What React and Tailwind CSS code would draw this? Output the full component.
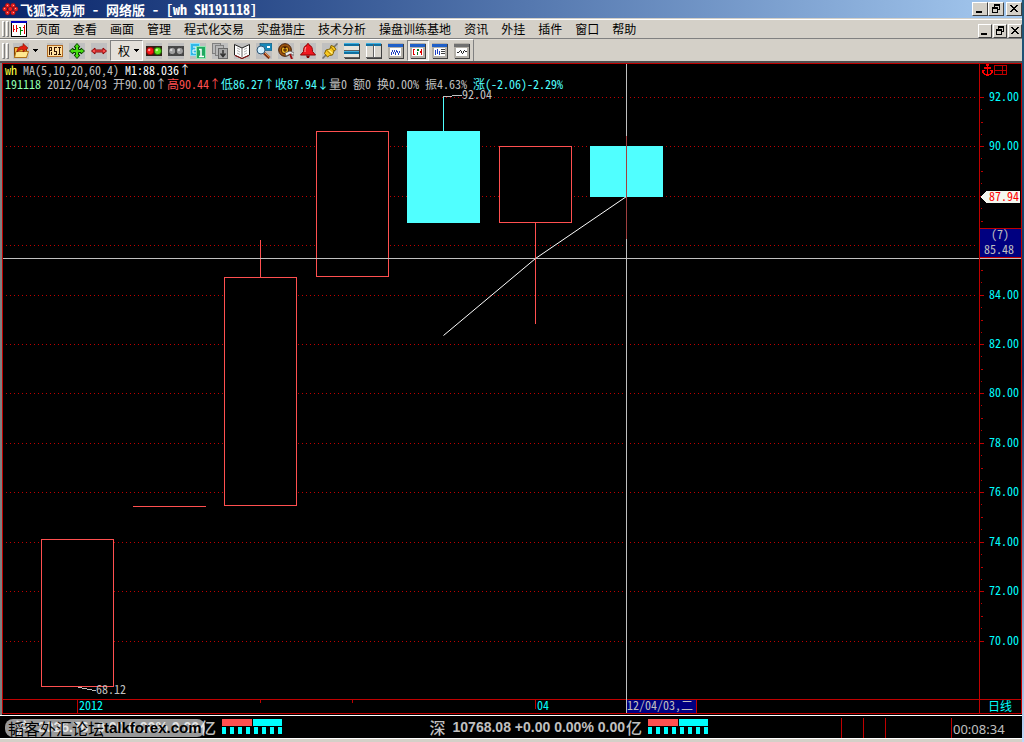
import clsx from "clsx";

const MENUS = [
  "页面", "查看", "画面", "管理", "程式化交易", "实盘猎庄", "技术分析",
  "操盘训练基地", "资讯", "外挂", "插件", "窗口", "帮助",
];

const QUOTE = [
  { text: "191118 ", color: "text-[#90ffb0]" },
  { text: "2012/04/03 开90.00↑", color: "text-[#c0c0c0]" },
  { text: "高90.44↑", color: "text-[#ff5050]" },
  { text: "低86.27↑收87.94↓", color: "text-[#50ffff]" },
  { text: "量0 额0 换0.00% 振4.63% ", color: "text-[#c0c0c0]" },
  { text: "涨(-2.06)-2.29%", color: "text-[#50ffff]" },
];

const GRID_LINES = [97, 146, 196, 245, 295, 344, 393, 443, 492, 542, 591, 641];

const PRICES = [
  { y: 97, label: "92.00" },
  { y: 146, label: "90.00" },
  { y: 295, label: "84.00" },
  { y: 344, label: "82.00" },
  { y: 393, label: "80.00" },
  { y: 443, label: "78.00" },
  { y: 492, label: "76.00" },
  { y: 542, label: "74.00" },
  { y: 591, label: "72.00" },
  { y: 641, label: "70.00" },
];

const CANDLES = [
  { x: 41, top: 539, bottom: 686 },
  { x: 224, top: 277, bottom: 505, wick: [240, 277] },
  { x: 316, top: 131, bottom: 276 },
  { x: 407, top: 131, bottom: 222, wick: [96, 131], down: true },
  { x: 499, top: 146, bottom: 222, wick: [222, 323] },
  { x: 590, top: 146, bottom: 196, down: true },
];

const RED = "#c00000";
const MONO = "[font-feature-settings:'hwid']";

/* ---------- window chrome ---------- */

const Glyph = ({ kind }) => (
  <svg width="10" height="10" viewBox="0 0 10 10" shapeRendering="crispEdges">
    {kind === "min" && <rect x="1" y="7" width="6" height="2" />}
    {kind === "restore" && (
      <path
        fillRule="evenodd"
        d="M3 0h6v6H7v3H1V3h2zM4 2v1h3v2h1V2zM2 5v3h4V5z"
      />
    )}
    {kind === "close" && (
      <path d="M1 1h2v1h1v1h2V2h1V1h2v1H8v1H7v1H6v1h1v1h1v1h1v1H7V7H6V6H4v1H3v1H1V7h1V6h1V5h1V4H3V3H2V2H1z" />
    )}
  </svg>
);

const WinButton = ({ kind, small, label }) => (
  <button
    aria-label={label}
    className={clsx(
      "flex h-[14px] items-center justify-center border border-t-white border-l-white border-r-[#404040] border-b-[#404040] bg-[#d4d0c8]",
      small ? "w-[14px]" : "w-4"
    )}
  >
    <Glyph kind={kind} />
  </button>
);

const Grip = () => (
  <div className="flex h-4 w-[7px] gap-px">
    <span className="w-[3px] border border-t-white border-l-white border-r-[#808080] border-b-[#808080]" />
    <span className="w-[3px] border border-t-white border-l-white border-r-[#808080] border-b-[#808080]" />
  </div>
);

const FoxLogo = () => (
  <svg width="17" height="14" viewBox="0 0 17 14">
    <g fill="#f02020" stroke="#801010" strokeWidth="0.5">
      <circle cx="5.5" cy="3.5" r="2.3" />
      <circle cx="11" cy="3.5" r="2.3" />
      <circle cx="2.8" cy="7" r="2.3" />
      <circle cx="8.3" cy="7" r="2.3" />
      <circle cx="13.8" cy="7" r="2.3" />
      <circle cx="5.5" cy="10.8" r="2.3" />
      <circle cx="11" cy="10.8" r="2.3" />
    </g>
    <g fill="#ffb0a0">
      <rect x="5" y="3" width="1" height="1" />
      <rect x="11" y="3" width="1" height="1" />
      <rect x="2" y="6" width="1" height="1" />
      <rect x="13" y="6" width="1" height="1" />
      <rect x="5" y="10" width="1" height="1" />
      <rect x="11" y="10" width="1" height="1" />
    </g>
  </svg>
);

const DocIcon = () => (
  <svg width="16" height="16" viewBox="0 0 16 16" shapeRendering="crispEdges">
    <rect width="16" height="16" fill="#000" />
    <rect width="16" height="2" fill="#0000c0" />
    <rect x="1" y="2" width="14" height="13" fill="#fff" />
    <path d="M2 4h1v7H2zM3 8h1v1H3zM5 4h1v7H5zM6 7h1v1H6z" fill="#e00000" />
    <path d="M9 6h1v8H9zM8 6h1v1H8zM10 9h2v1h-2z" fill="#008000" />
    <path d="M13 4h1v9h-1zM12 6h1v1h-1z" fill="#e00000" />
  </svg>
);

/* ---------- toolbar icons ---------- */

const Tile = ({ children }) => (
  <svg width="16" height="16" viewBox="0 0 16 16">
    <rect width="16" height="16" fill="#c0c0c0" />
    {children}
  </svg>
);

const OpenIcon = () => (
  <Tile>
    <path d="M1.500 4.500h4l1 1h7v9h-12z" fill="#f8b838" stroke="#804000" />
    <path d="M1.500 14.500l1.500-6h12.500l-2 6z" fill="#ffe890" stroke="#b07018" />
    <path d="M4 9c0-4 3-6 6-6V0.500L15 5l-5 4V6.500C8 6.500 6 7 4 9z" fill="#e02010" stroke="#801000" strokeWidth="0.6" />
  </Tile>
);

const RsiIcon = () => (
  <Tile>
    <rect x="0.5" y="2.5" width="15" height="11" fill="#ffe0a0" stroke="#b06820" />
    <g fill="none" stroke="#301000" shapeRendering="crispEdges">
      <path d="M2.500 12V4.500h2v3h-2M4.500 8.500V12" />
      <path d="M10 4.500H7.500v3.500h2v3.500H7" />
      <path d="M11 4.500h3M12.500 4v8M11 11.500h3" />
    </g>
  </Tile>
);

const MoveIcon = () => (
  <Tile>
    <path
      d="M8 0.500l3 3.500H9.500v2.500H12V5l3.500 3-3.500 3V9.500H9.500V12H11l-3 3.500L5 12h1.500V9.500H4V11L0.500 8 4 5v1.500h2.500V4H5z"
      fill="#48e010"
      stroke="#084000"
    />
  </Tile>
);

const WidthIcon = () => (
  <Tile>
    <path d="M0.500 8L4 5v2h8V5l3.500 3-3.500 3V9H4v2z" fill="#f85050" stroke="#900000" />
  </Tile>
);

const Lights = ({ on }) => (
  <Tile>
    <path d="M0 3h16v10H0z" fill={on ? "#302018" : "#484848"} />
    <circle cx="4.200" cy="8" r="3.700" fill={on ? "#f81818" : "#a0a0a0"} stroke={on ? "#900000" : "#303030"} strokeWidth="0.800" />
    <circle cx="11.800" cy="8" r="3.700" fill={on ? "#60e020" : "#a0a0a0"} stroke={on ? "#106000" : "#303030"} strokeWidth="0.800" />
    <circle cx="3.200" cy="7" r="1.200" fill={on ? "#ffa0a0" : "#d8d8d8"} />
    <circle cx="10.800" cy="7" r="1.200" fill={on ? "#d0ffa0" : "#d8d8d8"} />
  </Tile>
);

const CardsIcon = () => (
  <Tile>
    <rect x="0.500" y="0.500" width="9" height="12" fill="#30b8e8" stroke="#90e0f8" />
    <path d="M3 4h3v3H3v3h3" fill="none" stroke="#fff" />
    <rect x="6.500" y="3.500" width="9" height="12" fill="#20a860" stroke="#90e8b0" />
    <path d="M9 6.500h2v7M9 13.500h5" fill="none" stroke="#fff" strokeWidth="1.500" />
  </Tile>
);

const StackIcon = () => (
  <Tile>
    <rect x="0.500" y="0.500" width="8" height="10" fill="#b8b8b8" stroke="#808080" />
    <rect x="3.500" y="2.500" width="8" height="10" fill="#b8b8b8" stroke="#808080" />
    <rect x="6.500" y="5.500" width="9" height="10" fill="#a8a8a8" stroke="#686868" />
    <path d="M11 7v6M8.500 10.500L11 13.500l2.500-3" fill="none" stroke="#303030" strokeWidth="1.500" />
  </Tile>
);

const BookIcon = () => (
  <Tile>
    <path d="M0.500 1.500L8 5l7.500-3.500v10.500L8 15.500l-7.500-3.500z" fill="#fff" stroke="#202020" />
    <path d="M8 5v9" stroke="#606060" />
    <path d="M3 5l3 1.500M3 7.500L6 9M3 10l3 1.500M10 6.500L13 5M10 9l3-1.500M10 11.500l3-1.500" stroke="#b0b0b0" />
    <path d="M1 12.500l7 3 7-3" fill="none" stroke="#901010" />
  </Tile>
);

const FindIcon = () => (
  <Tile>
    <rect x="4" y="0.500" width="12" height="7" fill="#1888b8" stroke="#085078" strokeWidth="0.600" />
    <rect x="11" y="3" width="3" height="2" fill="#fff" />
    <path d="M8 10l5.500 5" stroke="#803010" strokeWidth="3" />
    <path d="M9 10l5 4.500" stroke="#f8a860" />
    <circle cx="5" cy="7" r="4" fill="#d0f0ff" stroke="#305878" />
    <path d="M3 7c0-1 1-2 2-2" fill="none" stroke="#fff" />
  </Tile>
);

const CoinIcon = () => (
  <Tile>
    <circle cx="7" cy="7" r="6.300" fill="#a05810" stroke="#401800" />
    <circle cx="7" cy="7" r="3.800" fill="#e8b020" stroke="#502000" />
    <path d="M5 7h4M7 5v4M5.500 4.500h3" stroke="#401800" />
    <path d="M7 10l5-2 4 2v2h-2v-1h-2l-4 2z" fill="#f0f0f0" stroke="#404040" strokeWidth="0.600" />
    <path d="M12 11l2 5" stroke="#a01010" strokeWidth="2" />
  </Tile>
);

const BellIcon = () => (
  <Tile>
    <path d="M8 0.500c1 0 1 1.500 1 1.500 3 1 3.500 3.500 3.500 6.500l3 3.500H0.500l3-3.500C3.500 5.500 4 3 7 2c0 0 0-1.500 1-1.500z" fill="#f01820" stroke="#900000" />
    <path d="M6 12.500h4l-1 2.500H7z" fill="#800000" />
    <path d="M6 4c-1 1-1 3-1 5" fill="none" stroke="#ffb0b0" />
  </Tile>
);

const PlugIcon = () => (
  <Tile>
    <path d="M0.500 15.500L4 12M12 4l3.500-3.500" stroke="#707070" strokeWidth="1.500" />
    <path d="M2.500 10.500L4 7l4-1 1-3.500 3 1 2 3-2 1.500-1.500 4-3 0.500-2 1.500z" fill="#f8c820" stroke="#806000" />
    <path d="M5 7.500l4 4M9 4l3 4" stroke="#a07000" />
    <path d="M6.500 7l4 3.500" stroke="#fff090" strokeWidth="1.200" />
  </Tile>
);

const RowsIcon = () => (
  <Tile>
    <g shapeRendering="crispEdges">
      <path d="M1 1h15v15H1z" fill="#404040" />
      <path d="M0 0h15v15H0z" fill="#e8e4dc" />
      <path d="M0 0h15v1H0zM0 8h15v1H0z" fill="#40b0e0" />
      <path d="M0 1h15v2H0zM0 9h15v2H0z" fill="#1070a0" />
      <path d="M0 7h15v1H0zM0 14h15v1H0z" fill="#606060" />
    </g>
  </Tile>
);

const ColsIcon = () => (
  <Tile>
    <g shapeRendering="crispEdges">
      <path d="M1 1h15v15H1z" fill="#404040" />
      <path d="M0 0h15v15H0z" fill="#d8d4cc" />
      <path d="M0 0h15v1H0z" fill="#40b0e0" />
      <path d="M0 1h15v2H0z" fill="#1070a0" />
      <path d="M7 1h1v14H7zM0 14h15v1H0z" fill="#606060" />
      <path d="M8 3h1v11H8zM0 3h1v11H0z" fill="#fff" />
    </g>
  </Tile>
);

const PaneIcon = ({ bar = "#2060c8", children }) => (
  <Tile>
    <g shapeRendering="crispEdges">
      <path d="M1 1h15v15H1z" fill="#404040" />
      <path d="M0 0h15v15H0z" fill="#b4b0a8" />
      <path d="M0 1h15v3H0z" fill={bar} />
      <path d="M2 5h11v8H2z" fill="#fff" />
      {children}
    </g>
  </Tile>
);

const Arrow = () => (
  <svg width="5" height="3" viewBox="0 0 5 3" shapeRendering="crispEdges">
    <path d="M0 0h5v1H4v1H3v1H2V2H1V1H0z" />
  </svg>
);

const TOOLS_LEFT = [
  { label: "RSI", icon: <RsiIcon /> },
  { label: "移动", icon: <MoveIcon /> },
  { label: "缩放", icon: <WidthIcon /> },
];

const TOOLS_RIGHT = [
  { label: "信号开", icon: <Lights on /> },
  { label: "信号关", icon: <Lights /> },
  { label: "周期", icon: <CardsIcon /> },
  { label: "叠加", icon: <StackIcon /> },
  { label: "帮助", icon: <BookIcon /> },
  { label: "查找", icon: <FindIcon /> },
  { label: "工具", icon: <CoinIcon /> },
  { label: "预警", icon: <BellIcon /> },
  { label: "插件", icon: <PlugIcon /> },
  { label: "横向", icon: <RowsIcon /> },
  { label: "纵向", icon: <ColsIcon /> },
  {
    label: "分时",
    icon: (
      <PaneIcon>
        <path
          d="M3 9h1v3H3zM4 7h1v2H4zM5 9h1v2H5zM6 7h1v2H6zM7 9h1v3H7zM8 7h1v2H8zM9 8h1v2H9zM10 10h1v2h-1zM11 8h1v2h-1z"
          fill="#2040c0"
        />
      </PaneIcon>
    ),
  },
  {
    label: "K线",
    active: true,
    icon: (
      <PaneIcon>
        <path d="M3 6h2v1H4v4h1v1H3zM11 6h1v6h-1zM10 8h1v2h-1z" fill="#e00000" />
        <path d="M7 6h2v2H7zM7 9h1v3H7z" fill="#008020" />
      </PaneIcon>
    ),
  },
  {
    label: "报表",
    icon: (
      <PaneIcon>
        <path d="M3 7h1v5H3zM5 6h1v5H5zM7 8h1v4H7z" fill="#2040c0" />
        <path d="M9 6h4v1H9zM9 8h4v1H9zM9 10h4v1H9z" fill="#404040" />
      </PaneIcon>
    ),
  },
  {
    label: "走势",
    icon: (
      <PaneIcon bar="#707070">
        <path d="M3 9h2v1H3zM5 8h1v1H5zM6 7h1v1H6zM7 8h1v2H7zM8 10h1v1H8zM9 8h1v2H9zM10 7h1v1h-1zM11 8h2v1h-2z" fill="#303030" />
      </PaneIcon>
    ),
  },
];

const ToolButton = ({ tool }) => (
  <button
    aria-label={tool.label}
    className={clsx(
      "flex h-[21px] w-[22px] items-center justify-center",
      tool.active &&
        "border border-t-[#808080] border-l-[#808080] border-r-white border-b-white bg-[#ece9e4]"
    )}
  >
    {tool.icon}
  </button>
);

/* ---------- chart ---------- */

const Candle = ({ x, top, bottom, wick, down }) => {
  const color = down ? "#50ffff" : "#ff5050";
  return (
    <g>
      {wick && <rect x={x + 36} y={wick[0]} width="1" height={wick[1] - wick[0] + 1} fill={color} />}
      <rect
        x={x + 0.5}
        y={top + 0.5}
        width="72"
        height={bottom - top}
        fill={down ? color : "#000"}
        stroke={color}
      />
    </g>
  );
};

// Drawing coordinates are those of the whole window: the plot starts at (3, 64)
const Plot = () => (
  <svg className={clsx("block h-[649px] w-full text-[12px]", MONO)} shapeRendering="crispEdges">
    <g transform="translate(-3 -64)">
      {GRID_LINES.map((y) => (
        <line key={y} x1="6" x2="100%" y1={y + 0.5} y2={y + 0.5} stroke={RED} strokeDasharray="1 3" />
      ))}
      {CANDLES.map((c) => (
        <Candle key={c.x} {...c} />
      ))}
      <rect x="133" y="506" width="73" height="1" fill="#ff5050" />
      <polyline
        points="443.5,335.5 535.5,258.5 626.5,196.5"
        fill="none"
        stroke="#fff"
        shapeRendering="geometricPrecision"
      />

      <path d="M443 96.5h9M452 95.500h10M78 687.500h4M82 688.500h5M87 689.500h5M92 690.500h4" stroke="#c0c0c0" />
      <text x="462" y="99" fill="#c0c0c0">92.04</text>
      <text x="96" y="694" fill="#c0c0c0">68.12</text>

      {/* date axis */}
      <rect x="3" y="699" width="100%" height="1" fill={RED} />
      <rect x="77" y="699" width="1" height="14" fill={RED} />
      <rect x="260" y="699" width="1" height="4" fill={RED} />
      <rect x="352" y="699" width="1" height="4" fill={RED} />
      <rect x="535" y="699" width="1" height="10" fill={RED} />
      <text x="79" y="710" fill="#00ffff">2012</text>
      <text x="537" y="710" fill="#00ffff">04</text>
      <rect x="627" y="700" width="69" height="13" fill="#000080" />
      <rect x="696" y="700" width="1" height="13" fill={RED} />
      <text x="627" y="710" fill="#c0c0c0">12/04/03,二</text>

      {/* crosshair */}
      <rect x="3" y="258" width="100%" height="1" fill="#c0c0c0" />
      <rect x="626" y="64" width="1" height="649" fill="#c0c0c0" />
      <rect x="626" y="136" width="1" height="103" fill="#a04040" />
    </g>
  </svg>
);

const PriceAxis = () => (
  <svg className={clsx("block h-[649px] w-[41px] text-[12px]", MONO)} shapeRendering="crispEdges">
    <g transform="translate(-980 -64)">
      <path
        d="M986 64h3v2h-1v1h3v2h-3v5h2v-1h1v-2h-1v-1h3v3h-1v1h-1v1h-2v1h-3v-1h-2v-1h-1v-1h-1v-3h3v1h-1v2h1v1h2v-5h-3v-2h3v-1h-1z"
        fill="#ff0000"
      />
      <path d="M994.500 65.500h12v9h-12zM994 70.500h12M1002.500 65v9" fill="none" stroke={RED} />
      {GRID_LINES.map((y) => (
        <g key={y} fill={RED}>
          <rect x="980" y={y} width="4" height="1" />
          <rect x="981" y={y + 12} width="1" height="1" />
          <rect x="981" y={y + 25} width="2" height="1" />
          <rect x="981" y={y + 37} width="1" height="1" />
        </g>
      ))}
      <rect x="980" y="653" width="5" height="46" fill="#000" />
      {PRICES.map((p) => (
        <text key={p.label} x="989" y={p.y + 4} fill="#00ffff">{p.label}</text>
      ))}
      <path d="M980 197l6-6h34v12h-34z" fill="#f4f8f0" />
      <text x="989" y="201" fill="#ff0000">87.94</text>
      <rect x="980" y="228" width="41" height="30" fill={RED} />
      <rect x="980" y="229" width="41" height="28" fill="#000080" />
      <text x="991" y="239" fill="#c0c0c0">(7)</text>
      <text x="984" y="254" fill="#c0c0c0">85.48</text>
      <rect x="980" y="258" width="41" height="1" fill="#c0c0c0" />
      <rect x="980" y="699" width="41" height="1" fill={RED} />
      <text x="988" y="711" fill="#00ffff">日线</text>
    </g>
  </svg>
);

/* ---------- status bar ---------- */

const Meter = () => (
  <div className="flex w-[60px] flex-col gap-px">
    <div className="flex gap-px">
      <span className="h-[7px] w-[30px] bg-[#ff5050]" />
      <span className="h-[7px] flex-1 bg-[#00ffff]" />
    </div>
    <div className="flex justify-between">
      {[0, 1, 2, 3, 4, 5, 6, 7].map((i) => (
        <span key={i} className="h-[7px] w-1 bg-[#00ffff]" />
      ))}
    </div>
  </div>
);

const IndexCell = ({ name, quote, className }) => (
  <div className={clsx("flex items-center justify-end pb-px text-[#c0c0c0]", className)}>
    <span className="text-[16px] font-medium">{name}</span>
    <span className="ml-[7px] font-['Liberation_Sans',sans-serif] text-[14px] font-bold">{quote}</span>
    <span className="mr-[6px] ml-px text-[16px] font-medium">亿</span>
    <Meter />
  </div>
);

export default function App() {
  return (
    <div className="flex w-full overflow-hidden bg-[#d4d0c8] font-['Noto_Sans_CJK_SC',sans-serif] text-black">
      <div className="min-w-0 flex-1">
        {/* title bar */}
        <header className="flex h-[18px] items-center bg-linear-to-r from-[#0a246a] to-[#a6caf0] pl-[2px]">
          <FoxLogo />
          <h1 className={clsx("ml-px flex-1 whitespace-pre text-[13px] leading-[18px] font-bold text-white", MONO)}>
            飞狐交易师<span className="text-[14px]"> - </span>网络版
            <span className="text-[14px]"> - [wh SH191118]</span>
          </h1>
          <WinButton kind="min" label="最小化" />
          <WinButton kind="restore" label="还原" />
          <span className="w-[2px]" />
          <WinButton kind="close" label="关闭" />
        </header>

        {/* menu bar */}
        <nav className="mt-px flex h-5 items-center border-t border-b border-t-white border-b-[#808080] pl-[2px]">
          <Grip />
          <span className="ml-[2px]">
            <DocIcon />
          </span>
          <div className="ml-[9px] flex flex-1 gap-[13px]">
            {MENUS.map((m) => (
              <button key={m} className="text-[12px] leading-4 whitespace-nowrap">{m}</button>
            ))}
          </div>
          <div className="flex gap-px self-end">
            <WinButton kind="min" small label="最小化窗口" />
            <WinButton kind="restore" small label="还原窗口" />
            <WinButton kind="close" small label="关闭窗口" />
          </div>
        </nav>

        {/* toolbar */}
        <div className="flex h-[24px] border-b-2 border-[#505050]">
          <div className="flex items-center border-r border-t border-t-white border-r-[#808080] pl-[2px]">
            <Grip />
            <button aria-label="打开" className="flex h-[21px] w-[24px] items-center justify-center">
              <OpenIcon />
            </button>
            <button aria-label="打开列表" className="flex h-[21px] w-[11px] items-center">
              <Arrow />
            </button>
            {TOOLS_LEFT.map((t) => (
              <ToolButton key={t.label} tool={t} />
            ))}
            <button className="flex h-[21px] w-[33px] items-center justify-end gap-1 border border-t-[#808080] border-l-[#808080] border-r-white border-b-white bg-[#e4e0da] pr-[3px] text-[12px]">
              权
              <Arrow />
            </button>
            {TOOLS_RIGHT.map((t) => (
              <ToolButton key={t.label} tool={t} />
            ))}
          </div>
        </div>

        {/* chart */}
        <main className="relative border-l-2 border-[#808080] bg-black pb-px">
          <div className="flex border border-[#c00000]">
            <div className="min-w-0 flex-1">
              <Plot />
            </div>
            <div className="border-l border-[#c00000]">
              <PriceAxis />
            </div>
          </div>
          <div className={clsx("absolute top-0 left-[3px] text-[12px] leading-[14px] whitespace-pre", MONO)}>
            <p>
              <span className="text-[#ffff40]">wh </span>
              <span className="text-[#c0c0c0]">MA(5,10,20,60,4) </span>
              <span className="text-white">M1:88.036↑</span>
            </p>
            <p>
              {QUOTE.map((q) => (
                <span key={q.text} className={q.color}>{q.text}</span>
              ))}
            </p>
          </div>
        </main>

        {/* status bar */}
        <footer className="relative flex h-[23px] border-t border-white bg-black leading-[22px]">
          <IndexCell name="沪" quote="2026.76 -0.00 0.00% 0.00" className="w-[282px]" />
          <IndexCell name="深" quote="10768.08 +0.00 0.00% 0.00" className="w-[426px]" />
          <div className="mt-[2px] ml-auto flex">
            <span className="w-[22px] border-l border-[#c00000]" />
            <span className="w-[22px] border-l border-[#c00000]" />
            <span className="w-[66px] border-l border-[#c00000]" />
            <time className="w-[71px] border-l border-[#c00000] pl-px font-['Noto_Sans',sans-serif] text-[13px] text-[#c0c0c0]">
              00:08:34
            </time>
          </div>
          <div className="absolute top-[3px] left-[5px] flex h-[18px] w-[200px] items-center rounded-lg bg-white/60 pl-[3px] text-black">
            <span className="text-[16px]">韬客外汇论坛</span>
            <span className="font-['Liberation_Sans',sans-serif] text-[15px] font-bold">talkforex.com</span>
          </div>
        </footer>
        <div className="h-1 border-t border-white bg-[#d4d0c8]" />
      </div>
      <div className="w-[2px] bg-linear-to-b from-[#205878] via-[#103060] to-[#c0d8f8]" />
    </div>
  );
}
